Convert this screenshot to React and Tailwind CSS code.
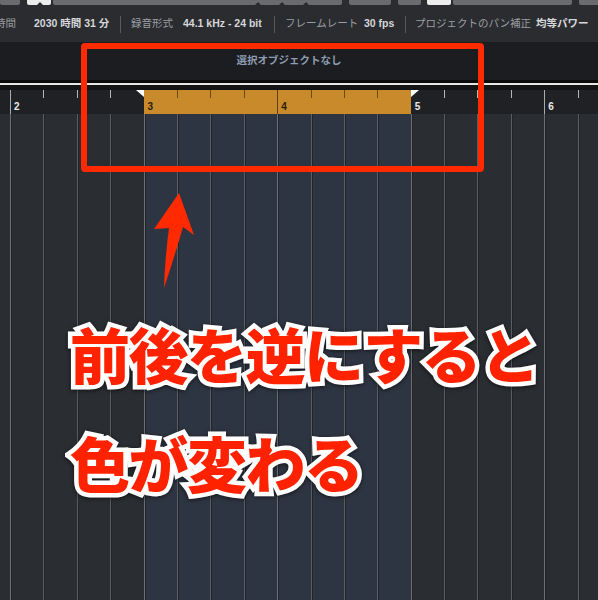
import React from "react";

const COLS = Array.from({ length: 18 }, (_, k) => k);
const inRange = (k) => k >= 4 && k < 12;

const Buttons = () => (
    <div className="flex h-[5px] bg-[#2a2c30]">
        <div className="w-[20px] shrink-0 rounded-b-[2px] bg-[#6a6b6d]" />
        <div className="relative ml-[7px] w-[24px] shrink-0 rounded-b-[2px] bg-[#ececec]">
            <div className="absolute bottom-0 left-[10px] h-0 w-0 border-x-[3px] border-b-[3px] border-x-transparent border-b-[#2a2c30]" />
        </div>
        <div className="relative ml-[2px] w-[289px] shrink-0 rounded-b-[2px] bg-[#6a6b6d]">
            <div className="absolute bottom-0 left-[202px] h-0 w-0 border-x-[3px] border-b-[3px] border-x-transparent border-b-[#2a2c30]" />
            <div className="absolute bottom-0 left-[226px] h-0 w-0 border-x-[3px] border-b-[3px] border-x-transparent border-b-[#2a2c30]" />
            <div className="absolute bottom-0 left-[250px] h-0 w-0 border-x-[3px] border-b-[3px] border-x-transparent border-b-[#2a2c30]" />
        </div>
        <div className="ml-[7px] w-[42px] shrink-0 rounded-b-[2px] bg-[#6a6b6d]" />
        <div className="ml-[7px] w-[23px] shrink-0 rounded-b-[2px] bg-[#6a6b6d]" />
        <div className="ml-[6px] w-[24px] shrink-0 rounded-b-[2px] bg-[#ececec]" />
        <div className="ml-[2px] w-[119px] shrink-0 rounded-b-[2px] bg-[#6a6b6d]" />
        <div className="ml-[7px] w-[30px] shrink-0 rounded-b-[2px] bg-[#6a6b6d]" />
    </div>
);

const Divider = ({ w }) => (
    <div className={"flex h-[17px] shrink-0 " + w}>
        <div className="w-px bg-[#57595d]" />
    </div>
);

const InfoBar = () => (
    <div className="flex h-[37px] items-center overflow-hidden whitespace-nowrap bg-[#2a2c30] pt-[1px] text-[10.5px] font-['Liberation_Sans','Noto_Sans_CJK_JP',sans-serif]">
        <div className="ml-[-5px] w-[39px] shrink-0 text-[#9c9ea2]">時間</div>
        <div className="w-[86px] shrink-0 font-bold text-[#d6d7d9]">2030 時間 31 分</div>
        <Divider w="w-[11px]" />
        <div className="w-[52px] shrink-0 text-[#9c9ea2]">録音形式</div>
        <div className="w-[91px] shrink-0 font-bold text-[#d6d7d9]">44.1 kHz - 24 bit</div>
        <Divider w="w-[11px]" />
        <div className="w-[79px] shrink-0 text-[#9c9ea2]">フレームレート</div>
        <div className="w-[41px] shrink-0 font-bold text-[#d6d7d9]">30 fps</div>
        <Divider w="w-[10px]" />
        <div className="w-[121px] shrink-0 text-[#9c9ea2]">プロジェクトのパン補正</div>
        <div className="shrink-0 font-bold text-[#d6d7d9]">均等パワー</div>
    </div>
);

const Ruler = () => (
    <div className="flex h-[24px] overflow-hidden bg-[#1f2125] font-['Liberation_Sans',sans-serif] text-[10px] font-bold">
        <div className="w-[10px] shrink-0" />
        {COLS.map((k) => {
            const orange = inRange(k);
            const bar = k % 4 === 0;
            let line = "bg-[#b5b7ba] h-[8px]";
            if (bar) line = orange ? (k === 4 ? "bg-transparent h-full" : "bg-[#5e3f10] h-full") : k === 12 ? "bg-transparent h-full" : "bg-[#a9abae] h-full";
            else if (orange) line = "bg-[#6e4b16] h-[8px]";
            return (
                <div key={k} className={"relative flex w-[33.4px] shrink-0 " + (orange ? "bg-[#c88a2b]" : "")}>
                    <div className={"w-px shrink-0 " + line} />
                    {bar && (
                        <span className={"absolute bottom-[2px] left-[4px] leading-none " + (orange ? "text-[#2a1c06]" : "text-[#e8e8e8]")}>
                            {k / 4 + 2}
                        </span>
                    )}
                    {k === 3 && (
                        <div className="absolute right-0 top-0 h-0 w-0 border-l-[8px] border-t-[7px] border-l-transparent border-t-white" />
                    )}
                    {k === 12 && (
                        <div className="absolute left-0 top-0 h-0 w-0 border-r-[8px] border-t-[7px] border-r-transparent border-t-white" />
                    )}
                </div>
            );
        })}
    </div>
);

const Grid = () => (
    <div className="flex h-[486px] overflow-hidden bg-[#2a2d31]">
        <div className="w-[10px] shrink-0" />
        {COLS.map((k) => (
            <div
                key={k}
                className={"flex w-[33.4px] shrink-0 " + (inRange(k) ? "bg-[#2e3542]" : "bg-[#2a2d31]")}
            >
                <div className={"w-px " + (k % 4 === 0 ? "bg-[#6d7075]" : "bg-[#5a5d62]")} />
                <div className="w-px bg-[#222428]" />
            </div>
        ))}
    </div>
);

const Arrow = () => (
    <svg className="absolute left-0 top-0" width="598" height="600" viewBox="0 0 598 600">
        <path
            d="M179,193 L194,235 L183,227 Q175,255 164,288 Q165,258 169,228 L154,229 Z"
            fill="#ff2a00"
        />
    </svg>
);

const Caption = () => (
    <div className="absolute left-[70px] top-[317px] font-['Noto_Sans_CJK_JP',sans-serif] text-[60px] font-black leading-[109px] tracking-[-1.5px] text-[#ff2200] [-webkit-text-stroke:9px_#ffffff] [paint-order:stroke_fill] [filter:drop-shadow(0_1px_2px_rgba(0,0,0,0.6))]">
        <div className="leading-[72px]">前後を逆にすると</div>
        <div className="mt-[37px] leading-[72px]">色が変わる</div>
    </div>
);

export default function App() {
    return (
        <div className="relative h-[600px] w-[598px] overflow-hidden bg-[#2a2d31]">
            <Buttons />
            <InfoBar />
            <div className="flex h-[38px] items-center justify-center bg-[#1c1d20] pb-[3px] pl-[-2px] font-['Noto_Sans_CJK_JP',sans-serif] text-[10.5px] font-bold text-[#8d9cb0]">
                <span className="ml-[-20px]">選択オブジェクトなし</span>
            </div>
            <div className="h-[3px] bg-[#0b0b0c]" />
            <div className="h-[2px] bg-[#e6e6e6]" />
            <div className="h-[5px] bg-[#131416]" />
            <Ruler />
            <Grid />
            <div className="absolute left-[81px] top-[43px] h-[129px] w-[403px] rounded-[4px] border-[6px] border-[#ff2a00]" />
            <Arrow />
            <Caption />
        </div>
    );
}
